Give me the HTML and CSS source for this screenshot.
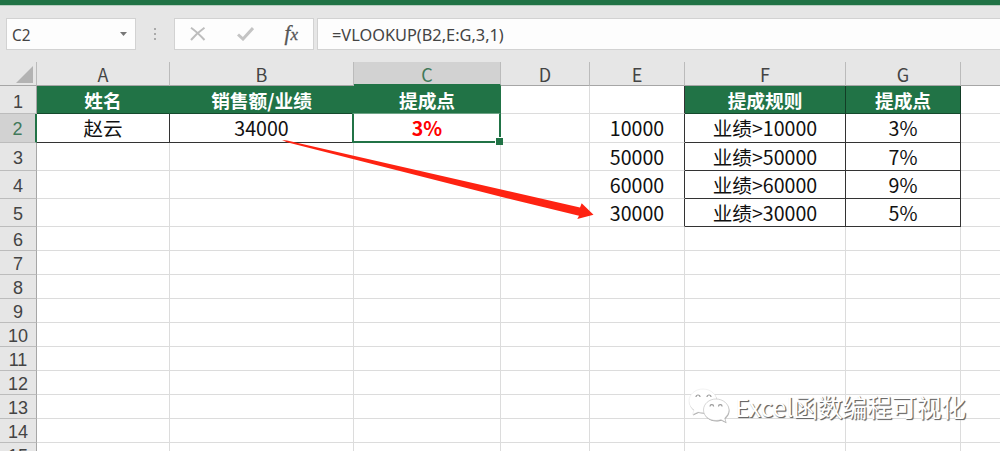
FILE: index.html
```html
<!DOCTYPE html>
<html lang="zh-CN">
<head>
    <meta charset="UTF-8">
    <title>VLOOKUP</title>
    <link rel="stylesheet" href="styles.css">
</head>
<body>

<div class="titlebar"></div>

<!-- Formula bar -->
<div class="formula-bar">
    <div class="name-box">
        <span>C2</span>
        <svg class="caret" width="7" height="4" viewBox="0 0 7 4"><path d="M0 0h7L3.5 4z" fill="#777"/></svg>
    </div>
    <div class="grip"><i></i><i></i><i></i></div>
    <div class="tools">
        <svg width="16" height="14" viewBox="0 0 16 14"><path d="M1 .8Q7 5 14.5 13M14.5 .8Q7 6 1 13" fill="none" stroke="#bdbdbd" stroke-width="2"/></svg>
        <svg width="17" height="14" viewBox="0 0 17 14"><path d="M1 7.5l5 4.5L16 1" fill="none" stroke="#c4c4c4" stroke-width="3"/></svg>
        <span class="fx"><b>f</b>x</span>
    </div>
    <div class="formula"><span>=VLOOKUP(B2,E:G,3,1)</span></div>
</div>

<!-- Sheet -->
<div class="sheet">
    <table class="grid">
        <colgroup>
            <col class="c-num"><col class="c-a"><col class="c-b"><col class="c-c"><col class="c-d"><col class="c-e"><col class="c-f"><col class="c-g"><col class="c-h">
        </colgroup>
        <tr class="cols">
            <th class="corner"><svg width="17" height="17" viewBox="0 0 17 17"><path d="M17 0v17H0z" fill="#b3b3b3"/></svg></th>
            <th>A</th><th>B</th><th class="active">C</th><th>D</th><th>E</th><th>F</th><th>G</th><th>H</th>
        </tr>
        <tr class="tall first">
            <th>1</th>
            <td class="head"><span>姓名</span></td>
            <td class="head"><span>销售额/业绩</span></td>
            <td class="head last"><span>提成点</span></td>
            <td></td>
            <td class="edge"></td>
            <td class="head box"><span>提成规则</span></td>
            <td class="head box"><span>提成点</span></td>
            <td></td>
        </tr>
        <tr class="tall second">
            <th class="active">2</th>
            <td class="box"><span>赵云</span></td>
            <td class="box"><span>34000</span></td>
            <td class="selected"><span>3%</span><div class="selection"></div></td>
            <td></td>
            <td class="edge"><span>10000</span></td>
            <td class="box"><span>业绩&gt;10000</span></td>
            <td class="box"><span>3%</span></td>
            <td></td>
        </tr>
        <tr class="tall">
            <th>3</th><td></td><td></td><td></td><td></td>
            <td class="edge"><span>50000</span></td>
            <td class="box"><span>业绩&gt;50000</span></td>
            <td class="box"><span>7%</span></td>
            <td></td>
        </tr>
        <tr class="tall">
            <th>4</th><td></td><td></td><td></td><td></td>
            <td class="edge"><span>60000</span></td>
            <td class="box"><span>业绩&gt;60000</span></td>
            <td class="box"><span>9%</span></td>
            <td></td>
        </tr>
        <tr class="tall">
            <th>5</th><td></td><td></td><td></td><td></td>
            <td class="edge"><span>30000</span></td>
            <td class="box"><span>业绩&gt;30000</span></td>
            <td class="box"><span>5%</span></td>
            <td></td>
        </tr>
        <tr><th>6</th><td></td><td></td><td></td><td></td><td></td><td></td><td></td><td></td></tr>
        <tr><th>7</th><td></td><td></td><td></td><td></td><td></td><td></td><td></td><td></td></tr>
        <tr><th>8</th><td></td><td></td><td></td><td></td><td></td><td></td><td></td><td></td></tr>
        <tr><th>9</th><td></td><td></td><td></td><td></td><td></td><td></td><td></td><td></td></tr>
        <tr><th>10</th><td></td><td></td><td></td><td></td><td></td><td></td><td></td><td></td></tr>
        <tr><th>11</th><td></td><td></td><td></td><td></td><td></td><td></td><td></td><td></td></tr>
        <tr><th>12</th><td></td><td></td><td></td><td></td><td></td><td></td><td></td><td></td></tr>
        <tr><th>13</th><td></td><td></td><td></td><td></td><td></td><td></td><td></td><td></td></tr>
        <tr><th>14</th><td></td><td></td><td></td><td></td><td></td><td></td><td></td><td></td></tr>
        <tr><th>15</th><td></td><td></td><td></td><td></td><td></td><td></td><td></td><td></td></tr>
    </table>

    <!-- Arrow from B2 to E5 -->
    <svg class="arrow" width="314" height="82" viewBox="0 0 314 82">
        <path d="M1 0L6 .6L299 67.500L300.700 63.300L312.500 74.700L296.300 79L298 75.800L219 56.500L6 2.200z" fill="#fe2312"/>
    </svg>

    <div class="watermark">
        <svg width="42" height="36" viewBox="0 0 42 36">
            <g fill="#aaa" transform="translate(.5 1)">
                <path d="M15 1C7 1 1 6.500 1 13c0 4 2 7 5 9l-1.500 4.500L10 24c2 .6 4 .8 6 .8C24 25 29 19 29 13S23 1 15 1z"/>
                <path d="M28 11c-7 0-12.500 5-12.500 11S21 32.500 28 32.500c2 0 3.500-.3 5-.8l5 2.600-1.300-4.300c2.500-2 4.300-5 4.300-8C41 16 35 11 28 11z"/>
            </g>
            <path d="M15 1C7 1 1 6.500 1 13c0 4 2 7 5 9l-1.500 4.500L10 24c2 .6 4 .8 6 .8C24 25 29 19 29 13S23 1 15 1z" fill="#fff" stroke="#ddd" stroke-width=".4"/>
            <path d="M28 11c-7 0-12.500 5-12.500 11S21 32.500 28 32.500c2 0 3.500-.3 5-.8l5 2.600-1.300-4.300c2.500-2 4.300-5 4.300-8C41 16 35 11 28 11z" fill="#fff" stroke="#bbb" stroke-width=".6"/>
            <g fill="none" stroke="#999" stroke-width="1.200">
                <path d="M8 9a2 2 0 0 1 4 0M19 9a2 2 0 0 1 4 0M22 18.500a1.800 1.800 0 0 1 3.600 0M30.500 18.500a1.800 1.800 0 0 1 3.600 0"/>
            </g>
        </svg>
        <span>Excel函数编程可视化</span>
    </div>
</div>

</body>
</html>
```
FILE: styles.css
```css
* {
    box-sizing: border-box;
}

body {
    margin: 0;
    height: 451px;
    overflow: hidden;
    background-color: #e6e6e6;
    color: #222;
    font-family: "Noto Sans CJK SC", sans-serif;
}

.titlebar {
    height: 5px;
    background-color: #217346;
    box-shadow: 0 1px 0 #b9cdc1;
}

/* Formula bar */
.formula-bar {
    display: flex;
    height: 57px;
    padding: 13px 0 12px 6px;
    color: #444;
    font-family: "Noto Sans", sans-serif;
    font-size: 16.5px;
}

.name-box,
.tools,
.formula {
    display: flex;
    align-items: center;
    background-color: #fdfdfd;
    border: 1px solid #d2d2d2;
}

.name-box {
    width: 130px;
    justify-content: space-between;
    padding: 0 8px 0 5px;
}

.name-box span {
    display: inline-block;
    transform: scaleX(.93);
    transform-origin: left;
}

.grip {
    width: 38px;
    display: flex;
    flex-direction: column;
    align-items: center;
    justify-content: center;
    gap: 3px;
    padding-bottom: 1px;
}

.grip i {
    width: 2px;
    height: 2px;
    background-color: #aaa;
}

.tools {
    width: 140px;
    justify-content: space-between;
    padding: 0 15px;
}

.fx {
    font-family: "Liberation Serif", serif;
    font-style: italic;
    font-size: 17px;
    line-height: 20px;
    color: #555;
    -webkit-text-stroke: .3px #555;
}

.fx b {
    font-size: 21px;
    font-weight: normal;
}

.formula {
    flex: 1;
    margin-left: 3px;
    padding-left: 14px;
    border-right: 0;
}

.formula span {
    display: inline-block;
    transform: scaleX(.99);
    transform-origin: left;
}

/* Sheet */
.sheet {
    position: relative;
    height: 389px;
    overflow: hidden;
}

.grid {
    width: 1051px;
    table-layout: fixed;
    border-collapse: separate;
    border-spacing: 0;
}

.c-num { width: 37px; }
.c-a { width: 133px; }
.c-b { width: 184px; }
.c-c { width: 147px; }
.c-d { width: 89px; }
.c-e { width: 95px; }
.c-f { width: 161px; }
.c-g { width: 115px; }
.c-h { width: 90px; }

.grid tr { height: 24px; }
.grid .tall { height: 28px; }
.grid .second { height: 29px; }

.grid th,
.grid td {
    padding: 0;
    border-right: 1px solid #dcdcdc;
    border-bottom: 1px solid #dcdcdc;
    text-align: center;
    line-height: 20px;
    white-space: nowrap;
}

.grid td {
    background-color: #fff;
    font-size: 19.6px;
    color: #111;
}

.grid td > span {
    display: block;
    height: 20px;
}

.grid th {
    background-color: #e6e6e6;
    border-right-color: #a6a6a6;
    border-bottom-color: #bcbcbc;
    color: #444;
    font-family: "Liberation Sans", sans-serif;
    font-size: 18px;
    font-weight: normal;
    padding-top: 3px;
}

.grid .first th {
    padding-top: 5px;
}

.grid .second th {
    padding-top: 2px;
}

.grid .cols th {
    border-right-color: #bbb;
    border-bottom-color: #a6a6a6;
    font-family: "Noto Sans CJK SC", sans-serif;
    font-size: 18px;
    padding-top: 2px;
}

.grid .cols .corner {
    text-align: right;
    padding: 2px 3px 0 0;
    line-height: 0;
}

.grid th.active {
    background-color: #d2d2d2;
    color: #41795a;
    border-right: 2px solid #217346;
}

.grid .cols th.active {
    border-right: 1px solid #bbb;
    border-bottom: 2px solid #217346;
    padding-top: 2px;
}

/* Cells */
.grid .edge {
    border-right-color: #333;
}

.grid .box {
    border-color: #333;
}

.grid .head {
    background-color: #217346;
    border-right-color: #217346;
    border-bottom-color: #154a2d;
    color: #fff;
    font-size: 18.7px;
    font-weight: bold;
}

.grid .head.box {
    border-right-color: #123d26;
}

.grid .selected {
    position: relative;
    color: #f00;
    font-weight: bold;
}

.selection {
    position: absolute;
    top: -1px;
    right: -1px;
    bottom: -1px;
    left: -2px;
    border: 2px solid #217346;
    border-top: 1px solid #6ea386;
}

.selection::after {
    content: "";
    position: absolute;
    right: -4px;
    bottom: -4px;
    width: 7px;
    height: 7px;
    background-color: #217346;
    border: 1px solid #fff;
    border-width: 1px 0 0 1px;
}

.grid .cols th {
    line-height: 19px;
}

.arrow {
    position: absolute;
    left: 281px;
    top: 78px;
}

.watermark {
    position: absolute;
    left: 688px;
    top: 326px;
    display: flex;
    align-items: center;
    gap: 5px;
    color: #fff;
    font-family: "Noto Sans CJK SC", sans-serif;
    font-size: 24.7px;
    line-height: 36px;
    text-shadow: 1px 1px 1px #666, 1px 1px 0 #888;
}
```
